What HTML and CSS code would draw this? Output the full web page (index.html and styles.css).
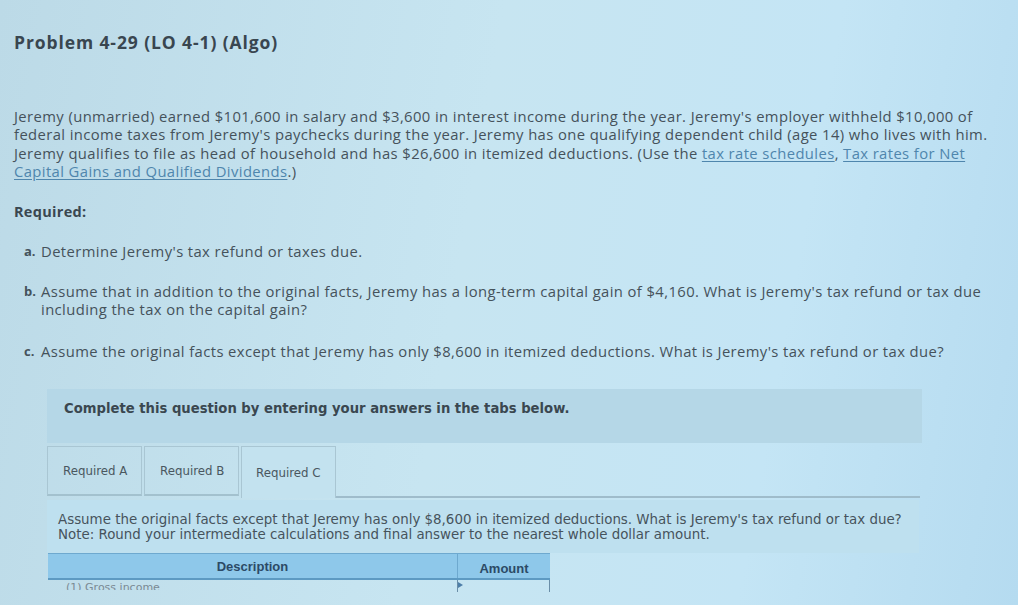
FILE: index.html
```html
<!DOCTYPE html>
<html lang="en">
<head>
<meta charset="utf-8">
<title>Problem 4-29</title>
<link rel="stylesheet" href="styles.css">
</head>
<body>
<div class="page">
  <h1 class="title">Problem 4-29 (LO 4-1) (Algo)</h1>
  <p class="intro">Jeremy (unmarried) earned $101,600 in salary and $3,600 in interest income during the year. Jeremy's employer withheld $10,000 of<br>federal income taxes from Jeremy's paychecks during the year. Jeremy has one qualifying dependent child (age 14) who lives with him.<br>Jeremy qualifies to file as head of household and has $26,600 in itemized deductions. (Use the <a class="link">tax rate schedules</a>, <a class="link">Tax rates for Net<br>Capital Gains and Qualified Dividends</a>.)</p>
  <h2 class="required">Required:</h2>
  <ol class="parts">
    <li><span class="mark">a.</span><span>Determine Jeremy's tax refund or taxes due.</span></li>
    <li><span class="mark">b.</span><span>Assume that in addition to the original facts, Jeremy has a long-term capital gain of $4,160. What is Jeremy's tax refund or tax due<br>including the tax on the capital gain?</span></li>
    <li><span class="mark">c.</span><span>Assume the original facts except that Jeremy has only $8,600 in itemized deductions. What is Jeremy's tax refund or tax due?</span></li>
  </ol>
  <div class="work">
    <div class="banner">Complete this question by entering your answers in the tabs below.</div>
    <div class="tabs">
      <div class="tab">Required A</div>
      <div class="tab">Required B</div>
      <div class="tab active">Required C</div>
      <div class="tab-rest"></div>
    </div>
    <div class="instructions">
      <div>Assume the original facts except that Jeremy has only $8,600 in itemized deductions. What is Jeremy's tax refund or tax due?</div>
      <div>Note: Round your intermediate calculations and final answer to the nearest whole dollar amount.</div>
    </div>
    <div class="table">
      <div class="thead">
        <div class="th desc">Description</div>
        <div class="th amt">Amount</div>
      </div>
      <div class="trow">
        <div class="td desc">(1) Gross income</div>
        <div class="td amt"><span class="caret"></span></div>
      </div>
    </div>
  </div>
</div>
</body>
</html>
```
FILE: styles.css
```css
html, body {
  margin: 0;
  padding: 0;
}
body {
  width: 1018px;
  height: 605px;
  overflow: hidden;
  background: linear-gradient(100deg, #bcdae7 0%, #c7e5f1 45%, #c4e5f5 75%, #b5dbf0 100%);
  color: #3f4c55;
  font-family: "Open Sans", Lato, sans-serif;
}
.page {
  padding: 30px 0 0 14px;
}
.title {
  margin: 0;
  font-size: 17.5px;
  line-height: 24px;
  font-weight: 700;
  letter-spacing: 0.9px;
  color: #394650;
}
.intro {
  margin: 53px 0 0 0;
  font-size: 14.8px;
  line-height: 18.4px;
  letter-spacing: 0.4px;
  color: #45525b;
}
.link {
  color: #4f86ad;
  text-decoration: underline;
  text-underline-offset: 2px;
}
.required {
  margin: 21px 0 0 0;
  font-size: 14.5px;
  font-weight: 700;
  letter-spacing: 0.3px;
  color: #3a4750;
}
.parts {
  list-style: none;
  margin: 21px 0 0 0;
  padding: 0 0 0 10px;
  font-size: 14.8px;
  line-height: 18px;
  letter-spacing: 0.4px;
  color: #45525b;
}
.parts li {
  display: flex;
  margin-bottom: 22px;
}
.parts li:nth-child(2) {
  margin-bottom: 24px;
}
.mark {
  width: 17px;
  flex: none;
  font-weight: 700;
  font-size: 13px;
  letter-spacing: 0;
}
.work {
  margin: 29px 0 0 33px;
  width: 875px;
  font-family: "DejaVu Sans", Verdana, sans-serif;
}
.banner {
  background: #b5d7e7;
  height: 54px;
  box-sizing: border-box;
  padding: 12px 0 0 17px;
  font-size: 13.2px;
  font-weight: 700;
  color: #3a4750;
}
.tabs {
  display: flex;
  margin-top: 3px;
  height: 52px;
}
.tab {
  width: 95px;
  box-sizing: border-box;
  border: 1px solid #a9c6d3;
  border-bottom: 2px solid #a3c1ce;
  margin-right: 2px;
  padding: 17px 0 0 15px;
  font-size: 11.8px;
  color: #4a5760;
  height: 50px;
}
.tab.active {
  border-bottom: none;
  height: 52px;
  padding: 19px 0 0 14px;
  margin-right: 0;
  background: #c3e2ef;
}
.tab-rest {
  flex: 1;
  border-bottom: 2px solid #9fbccb;
  height: 52px;
  box-sizing: border-box;
  margin-right: 2px;
}
.instructions {
  margin-top: 2px;
  width: 872px;
  height: 53px;
  box-sizing: border-box;
  padding: 12px 0 0 11px;
  background: #bee0ef;
  font-size: 13.4px;
  line-height: 15px;
  color: #46535c;
}
.table {
  width: 502px;
  margin-left: 1px;
}
.thead {
  display: flex;
  height: 27px;
  background: #8ec8ea;
  border-top: 1px solid #6ea9cf;
  border-bottom: 2px solid #5d9ac2;
  box-sizing: border-box;
}
.th {
  font-family: "Liberation Sans", Arial, sans-serif;
  font-size: 13px;
  font-weight: 700;
  color: #2c4a66;
  padding-top: 5px;
  text-align: center;
}
.th.desc {
  width: 409px;
  border-right: 1px solid #6ea9cf;
}
.th.amt {
  flex: 1;
  padding-top: 7px;
}
.trow {
  display: flex;
  height: 30px;
}
.td.desc {
  width: 409px;
  box-sizing: border-box;
  padding: 0 0 0 18px;
  font-size: 11px;
  color: #7a8a94;
  height: 10px;
  overflow: hidden;
  line-height: 16px;
}
.td.amt {
  flex: 1;
  border-left: 1px solid #6a8ea8;
  border-right: 1px solid #6a8ea8;
  height: 12px;
  position: relative;
}
.caret {
  position: absolute;
  left: 0;
  top: 2px;
  border-left: 5px solid #4d7ea8;
  border-top: 3px solid transparent;
  border-bottom: 3px solid transparent;
}
```
